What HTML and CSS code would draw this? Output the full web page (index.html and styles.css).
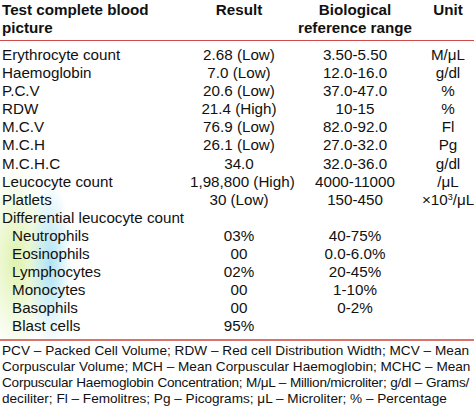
FILE: index.html
```html
<!DOCTYPE html>
<html>
<head>
<meta charset="utf-8">
<link rel="stylesheet" href="styles.css">
</head>
<body>
<div class="wrap">
  <table class="cbp">
    <colgroup>
      <col class="c1"><col class="c2"><col class="c3"><col class="c4">
    </colgroup>
    <thead>
      <tr>
        <th class="name">Test complete blood picture</th>
        <th>Result</th>
        <th>Biological<br>reference range</th>
        <th>Unit</th>
      </tr>
    </thead>
    <tbody>
      <tr><td class="name">Erythrocyte count</td><td>2.68 (Low)</td><td>3.50-5.50</td><td>M/μL</td></tr>
      <tr><td class="name">Haemoglobin</td><td>7.0 (Low)</td><td>12.0-16.0</td><td>g/dl</td></tr>
      <tr><td class="name">P.C.V</td><td>20.6 (Low)</td><td>37.0-47.0</td><td>%</td></tr>
      <tr><td class="name">RDW</td><td>21.4 (High)</td><td>10-15</td><td>%</td></tr>
      <tr><td class="name">M.C.V</td><td>76.9 (Low)</td><td>82.0-92.0</td><td>Fl</td></tr>
      <tr><td class="name">M.C.H</td><td>26.1 (Low)</td><td>27.0-32.0</td><td>Pg</td></tr>
      <tr><td class="name">M.C.H.C</td><td>34.0</td><td>32.0-36.0</td><td>g/dl</td></tr>
      <tr><td class="name">Leucocyte count</td><td>1,98,800 (High)</td><td>4000-11000</td><td>/μL</td></tr>
      <tr><td class="name">Platlets</td><td>30 (Low)</td><td>150-450</td><td>×10<sup>3</sup>/μL</td></tr>
      <tr><td class="name">Differential leucocyte count</td><td></td><td></td><td></td></tr>
      <tr><td class="name sub">Neutrophils</td><td>03%</td><td>40-75%</td><td></td></tr>
      <tr><td class="name sub">Eosinophils</td><td>00</td><td>0.0-6.0%</td><td></td></tr>
      <tr><td class="name sub">Lymphocytes</td><td>02%</td><td>20-45%</td><td></td></tr>
      <tr><td class="name sub">Monocytes</td><td>00</td><td>1-10%</td><td></td></tr>
      <tr><td class="name sub">Basophils</td><td>00</td><td>0-2%</td><td></td></tr>
      <tr><td class="name sub">Blast cells</td><td>95%</td><td></td><td></td></tr>
    </tbody>
  </table>
  <div class="notes">
    <div class="line">PCV – Packed Cell Volume; RDW – Red cell Distribution Width; MCV – Mean</div>
    <div class="line">Corpuscular Volume; MCH – Mean Corpuscular Haemoglobin; MCHC – Mean</div>
    <div class="line tight">Corpuscular Haemoglobin Concentration; M/μL – Million/microliter; g/dl – Grams/</div>
    <div class="line last">deciliter; Fl – Femolitres; Pg – Picograms; μL – Microliter; % – Percentage</div>
  </div>
</div>
</body>
</html>
```
FILE: styles.css
```css
html, body {
  margin: 0;
  padding: 0;
  background: #fff;
}
body {
  font-family: "Liberation Sans", Arial, sans-serif;
  color: #111;
  width: 474px;
  height: 408px;
  overflow: hidden;
}
.wrap {
  position: relative;
  padding-top: 1px;
}
.wrap::before {
  content: "";
  position: absolute;
  left: -10px;
  top: 165px;
  width: 110px;
  height: 174px;
  background:
    radial-gradient(ellipse 22px 85px at 60px 100px, rgba(160, 222, 240, 0.85), rgba(160, 222, 240, 0) 100%),
    radial-gradient(ellipse 36px 95px at 26px 95px, rgba(220, 242, 170, 0.95), rgba(220, 242, 170, 0) 100%);
  z-index: 0;
}
.cbp {
  position: relative;
  z-index: 1;
  border-collapse: collapse;
  table-layout: fixed;
  width: 474px;
  font-size: 15.2px;
}
.c1 { width: 190px; }
.c2 { width: 98px; }
.c3 { width: 134px; }
.c4 { width: 52px; }
.cbp th {
  font-weight: bold;
  line-height: 18px;
  padding: 0 0 3px 0;
  text-align: center;
  vertical-align: top;
  border-bottom: 1px solid #cf4a4a;
}
.cbp td {
  line-height: 18.1px;
  padding: 0;
  text-align: center;
  white-space: nowrap;
}
.cbp thead + tbody tr:first-child td {
  padding-top: 5px;
}
.cbp tbody tr:last-child td {
  padding-bottom: 3px;
  border-bottom: 2px solid #d9736c;
}
.cbp .name {
  text-align: left;
  padding-left: 2px;
}
.cbp .sub {
  padding-left: 12px;
}
sup {
  font-size: 9px;
  line-height: 0;
  vertical-align: 5px;
}
.notes {
  font-size: 13.6px;
  line-height: 16px;
  padding: 2px 5px 0 2px;
  width: 467px;
}
.line {
  text-align: justify;
  text-align-last: justify;
  white-space: nowrap;
}
.line.tight {
  letter-spacing: -0.25px;
}
.line.last {
  text-align-last: left;
}
```
